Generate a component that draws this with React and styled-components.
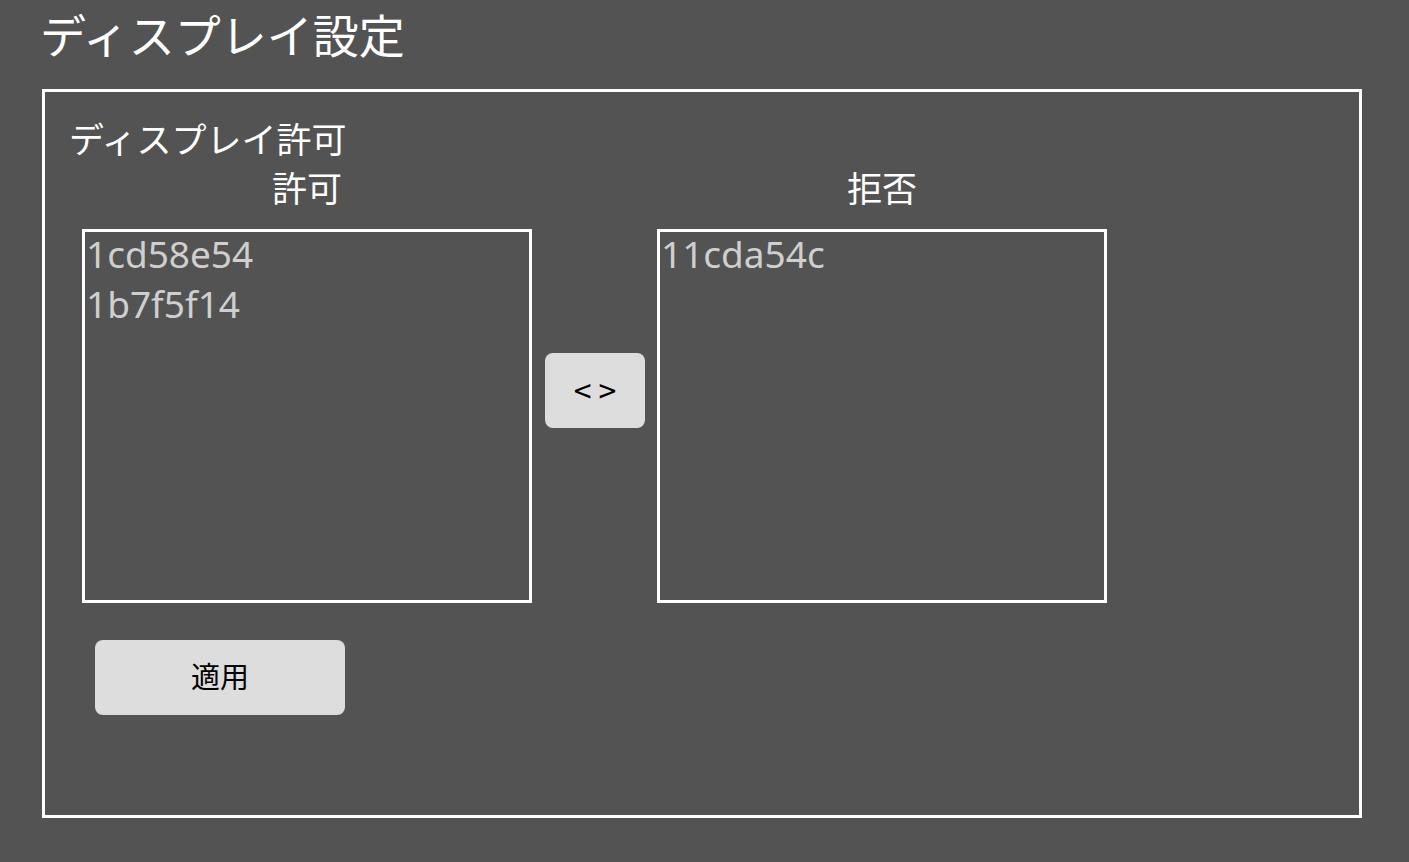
import React from 'react'
import styled, { createGlobalStyle } from 'styled-components'

const GlobalStyle = createGlobalStyle`
    html, body {
        margin: 0;
        padding: 0;
        background: #535353;
    }
    body {
        font-family: "Noto Sans CJK JP", "Noto Sans", sans-serif;
        color: #fff;
    }
`

const allowed = ['1cd58e54', '1b7f5f14']
const denied = ['11cda54c']

const App = () => {
    return (
        <>
            <GlobalStyle />
            <Page>
                <Title>ディスプレイ設定</Title>
                <Panel>
                    <SectionLabel>ディスプレイ許可</SectionLabel>
                    <ListsRow>
                        <Column>
                            <ColumnHeader>許可</ColumnHeader>
                            <ListBox>
                                {allowed.map(id => <Item key={id}>{id}</Item>)}
                            </ListBox>
                        </Column>
                        <SwapButton>&lt;&gt;</SwapButton>
                        <Column>
                            <ColumnHeader>拒否</ColumnHeader>
                            <ListBox>
                                {denied.map(id => <Item key={id}>{id}</Item>)}
                            </ListBox>
                        </Column>
                    </ListsRow>
                    <ApplyButton>適用</ApplyButton>
                </Panel>
            </Page>
        </>
    )
}

const Page = styled.div`
    padding: 10px 0 0 42px;
    height: 862px;
    box-sizing: border-box;
`

const Title = styled.h1`
    margin: 0 0 33px -2px;
    font-size: 46px;
    line-height: 46px;
    font-weight: normal;
    color: #fff;
`

const Panel = styled.section`
    box-sizing: border-box;
    width: 1320px;
    height: 729px;
    border: 3px solid #fff;
    padding: 28px 24px 0;
    display: flex;
    flex-direction: column;
    align-items: flex-start;
`

const SectionLabel = styled.h2`
    margin: 0;
    font-size: 35px;
    line-height: 35px;
    font-weight: normal;
    color: #fff;
`

const ListsRow = styled.div`
    display: flex;
    align-items: center;
    margin: 14px 0 0 13px;
`

const Column = styled.div`
    display: flex;
    flex-direction: column;
    align-items: center;
    width: 450px;
`

const ColumnHeader = styled.div`
    font-size: 35px;
    line-height: 35px;
    margin-bottom: 25px;
    color: #fff;
`

const ListBox = styled.div`
    box-sizing: border-box;
    width: 450px;
    height: 374px;
    border: 3px solid #fff;
    padding: 0 1px;
    overflow: hidden;
`

const Item = styled.div`
    font-family: "Noto Sans", "Noto Sans CJK JP", sans-serif;
    font-size: 37px;
    line-height: 44px;
    margin-bottom: 6px;
    color: #cfcfcf;
`

const Button = styled.button`
    border: none;
    border-radius: 8px;
    background: #dddddd;
    color: #000;
    font-family: "Noto Sans CJK JP", "Noto Sans", sans-serif;
    padding: 0;
    cursor: pointer;
    height: 75px;
`

const SwapButton = styled(Button)`
    width: 100px;
    margin: 9px 12px 0 13px;
    font-size: 32px;
    letter-spacing: 7px;
    text-indent: 7px;
    padding-bottom: 4px;
`

const ApplyButton = styled(Button)`
    width: 250px;
    margin: 37px 0 0 26px;
    font-size: 29px;
    padding-bottom: 5px;
`

export default App
